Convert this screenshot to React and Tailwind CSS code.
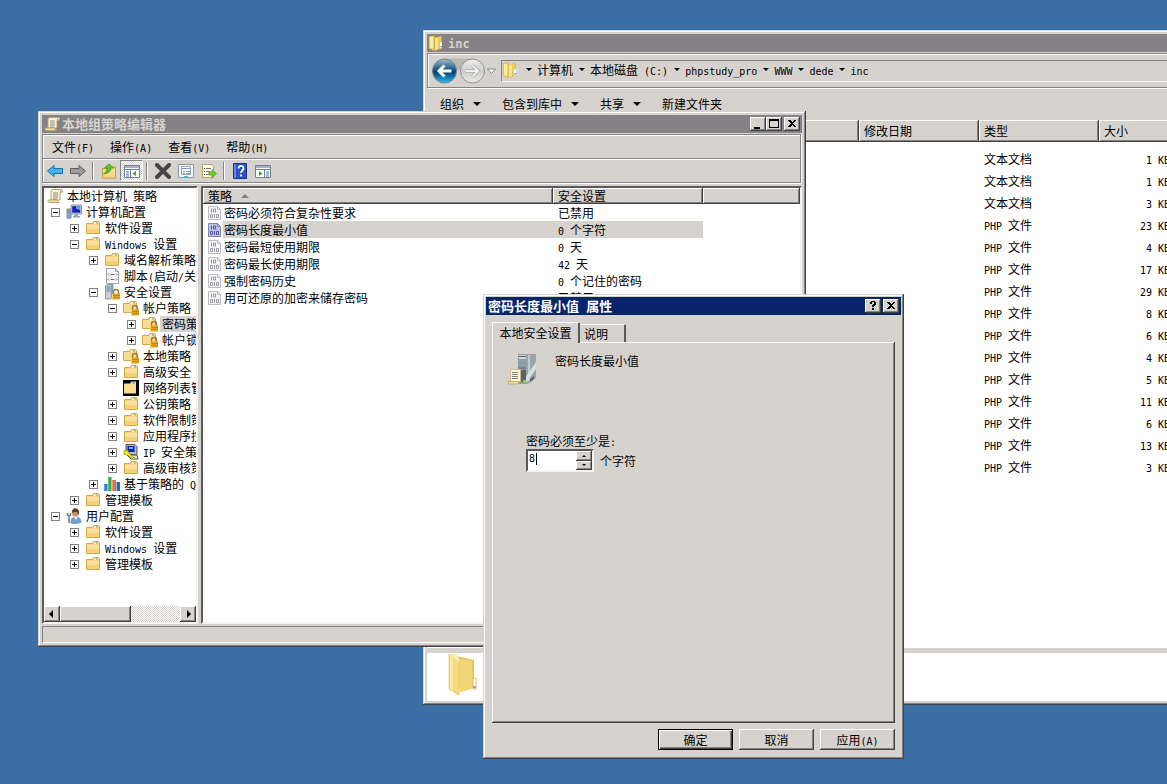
import React, { useState } from "react";

const RAISED =
  "bg-[#d6d3ce] shadow-[inset_-1px_-1px_0_#424142,inset_1px_1px_0_#fff,inset_-2px_-2px_0_#848284]";
const FRAME =
  "bg-[#d6d3ce] shadow-[inset_-1px_-1px_0_#424142,inset_1px_1px_0_#d6d3ce,inset_-2px_-2px_0_#848284,inset_2px_2px_0_#fff]";
const SUNKEN =
  "border-t-2 border-l-2 border-r-2 border-b-2 border-t-[#5a595a] border-l-[#5a595a] border-r-[#f4f3f1] border-b-[#f4f3f1]";
const ETCHED = "border border-[#848284] shadow-[inset_1px_1px_0_#fff,1px_1px_0_#fff]";
const DITHER =
  "bg-[repeating-conic-gradient(#fff_0_25%,#d6d3ce_0_50%)] bg-[length:2px_2px]";

// Latin runs are half the width of a Chinese character
const Text = ({ children, latin = "text-[10px]" }) => (
  <span className="whitespace-pre">
    {children.split(/([\x20-\x7e]+)/).map((part, i) =>
      i % 2 ? (
        <span key={i} className={`font-['DejaVu_Sans_Mono',monospace] leading-none ${latin}`}>
          {part}
        </span>
      ) : (
        part
      )
    )}
  </span>
);

const Svg = ({ size = "size-4", box = "0 0 16 16", children }) => (
  <svg className={`${size} shrink-0`} viewBox={box} aria-hidden="true">
    {children}
  </svg>
);

const FolderIcon = () => (
  <Svg>
    <path d="M1.500 3.500V13.500h13V2.500L13.500 1.500H8.500L7.500 3.500Z" fill="#f5d583" stroke="#d6a647" />
    <path d="M2 5h12v8H2z" fill="#fae09b" />
    <path d="M2 9h12v4H2z" fill="#f3d07c" />
    <path d="M9 2.500h4v1H9z" fill="#fff" />
    <path d="M11 2.500h2v1h-2z" fill="#4a9be0" />
  </Svg>
);

const FolderLockIcon = () => (
  <Svg>
    <path d="M.5 3.500V12.500h13V2.500L12.500 1.500H7.500L6.500 3.500Z" fill="#f9dc94" stroke="#d6a647" />
    <path d="M8 2.500h4v1H8z" fill="#fff" />
    <path d="M10 2.500h2v1h-2z" fill="#4a9be0" />
    <Lock />
  </Svg>
);

const Lock = () => (
  <g>
    <path d="M9.500 10V8a2.500 2.500 0 0 1 5 0v2" fill="none" stroke="#9c7a3a" strokeWidth="1.400" />
    <path d="M8 9.500h8V15.500H8z" fill="#e5a41d" />
    <path d="M8 11.500h8M8 13.500h8" stroke="#b67a0b" strokeWidth=".7" />
    <path d="M8.500 10v5" stroke="#f8d66e" />
  </g>
);

const FolderDarkIcon = () => (
  <Svg>
    <path d="M0 0h16v16H0z" fill="#000" />
    <path d="M1 3.500h6L8.500 1.500H13v12H1z" fill="#f9dc94" />
    <path d="M9 2.500h3v1H9z" fill="#4a9be0" />
  </Svg>
);

const ScrollIcon = () => (
  <Svg>
    <path d="M5 1.500h9a1.500 1.500 0 0 1 .5 3H13V12H4V3Z" fill="#fdf3d0" stroke="#b9a56f" />
    <path d="M1.500 12h9.500v1.500a1.500 1.500 0 0 0 1.500 1H3a1.500 1.500 0 0 1-1.500-2.500Z" fill="#f3e2a6" stroke="#b9a56f" />
    <path d="M6 5h5M6 7h5M6 9h5M6 11h4" stroke="#8a8a9c" />
    <path d="M13 2.500h1.500v1.500H13z" fill="#a89a78" />
  </Svg>
);

const ComputerIcon = () => (
  <Svg>
    <path d="M1 5h4v9H1z" fill="#b8bec8" stroke="#6c7480" strokeWidth=".8" />
    <path d="M2 7h2M2 9h2" stroke="#3e6fb0" />
    <path d="M5 1h10.500v9H5z" fill="#c9d2dd" stroke="#7a8798" strokeWidth=".8" />
    <path d="M6.200 2.200h8v6.500h-8z" fill="#1226b8" />
    <path d="M10 2.200h4.200v4L10 4.500z" fill="#6f9bf0" />
    <path d="M8.500 10h3.500v2h2v1.500H7V12h1.500z" fill="#98a4b3" />
    <path d="M1.500 9.500 3 11l1.500-1.500v3L3.500 15h-1l-1-2.500z" fill="#6aa0dc" />
  </Svg>
);

const ScriptIcon = () => (
  <Svg>
    <path d="M2.500.5h9l3 3v12h-12z" fill="#f7f8fa" stroke="#9ea3ab" />
    <path d="M11.500.5v3h3" fill="none" stroke="#9ea3ab" />
    <path d="M5 5.500 4 6.500 5 7.500M12 5.500 13 6.500 12 7.500M6.500 6.500h4M5 10.500 4 11.500 5 12.500M12 10.500 13 11.500 12 12.500M6.500 11.500h4" fill="none" stroke="#6a707a" />
  </Svg>
);

const ServerLockIcon = () => (
  <Svg>
    <path d="M1.500 1.500 4 .5h5v13l-3 1.500H1.500z" fill="#c4ccd6" stroke="#7d8793" strokeWidth=".8" />
    <path d="M2.500 3h4M2.500 5h4M2.500 7h4" stroke="#5d84ad" />
    <path d="M7 1h2v12H7z" fill="#939eac" />
    <Lock />
  </Svg>
);

const IpIcon = () => (
  <Svg>
    <path d="M3 .5h9l2 2v7l-1 1.500H5L3 9z" fill="#b5b9bf" stroke="#333" strokeWidth=".8" />
    <path d="M4.500 2h7v6h-7z" fill="#0b1dbb" />
    <path d="M6 3h4v2H6z" fill="#43c5ee" />
    <path d="M4 11h10l1 4H8z" fill="#dcdfe2" stroke="#333" strokeWidth=".8" />
    <path d="M1 6.500h4l1 3 6 4.500-1 1.500-7-4.500-3-1z" fill="#f7e616" stroke="#8a7c00" strokeWidth=".6" />
  </Svg>
);

const ChartIcon = () => (
  <Svg>
    <path d="M0 8h3.500v7H0z" fill="#1c87d6" />
    <path d="M4 1h3.500v14H4z" fill="#2fae43" />
    <path d="M8 4h4v11H8z" fill="#ec6b45" />
    <path d="M12.500 6H16v9h-3.500z" fill="#1670b8" />
    <path d="M.5 8.500v6M4.500 1.500v13M8.500 4.500v10" stroke="#fff" strokeOpacity=".3" />
  </Svg>
);

const UserIcon = () => (
  <Svg>
    <path d="M5 15c0-4 1-6 5-6s5 3 5 5c-2 1.500-7 2-10 1z" fill="#6f9fd8" stroke="#4e7ab0" strokeWidth=".6" />
    <path d="m8 9 2 3 1.500-3z" fill="#fff" />
    <circle cx="9.500" cy="5" r="3.600" fill="#c79569" />
    <path d="M6 4.500C6 1 8-.2 10.500.6 13 1.300 13.500 4 12.600 7L11 4z" fill="#4f4339" />
    <path d="M1.500 5v2l1.500 1 1.500-1V5M3 8v7" fill="none" stroke="#6d7782" strokeWidth="1.500" />
  </Svg>
);

const PolicyIcon = ({ active }) => (
  <Svg>
    <path d="M1.500 1.500h9l3 3v10h-12z" fill={active ? "#bfc3e2" : "#f6f6fa"} stroke={active ? "#8083b0" : "#bcbcc4"} />
    <path d="M10.500 1.500v3h3" fill="none" stroke={active ? "#8083b0" : "#bcbcc4"} />
    <path
      d="M4.500 3.500v4M6.500 4h2v3h-2zM3.500 9.500h2v3h-2zM7.500 9v4M9.500 9.500h2v3h-2z"
      fill="none"
      stroke={active ? "#54589c" : "#9a9aa8"}
    />
  </Svg>
);

const OpenFolderIcon = () => (
  <Svg size="w-8 h-11" box="0 0 32 44">
    <path d="M9 3 27 7v28l-14 4z" fill="#e6c55c" />
    <path d="M11 6 25 8v28l-12 2z" fill="#f0d678" />
    <path d="M2 1 11 6q1 1 1 2v34L2 36z" fill="#f4db7e" stroke="#dcb94e" strokeWidth=".6" />
    <path d="M2 1h8l2 5v3L4 3z" fill="#fbeeb0" />
    <path d="M3 4v32l3 2V5z" fill="#fae99f" />
    <path d="M26 25h3v11h-3z" fill="#fff" stroke="#e0c261" />
    <path d="M26.500 33h2v2h-2z" fill="#3fa2df" />
  </Svg>
);

const SmallOpenFolderIcon = () => (
  <Svg>
    <path d="M8 2.500 13.500 1v12L8 15.500z" fill="#edcb57" stroke="#cfa63c" strokeWidth=".5" />
    <path d="M1 1.500 6.500.5v13L6.500 16 1 13.500z" fill="#f0d164" stroke="#cfa63c" strokeWidth=".5" />
    <path d="M2 2h3v11H2z" fill="#fbeb9c" />
    <path d="M7 2.500h3V14l-3 1.500z" fill="#f9e48a" />
    <path d="M12 7.500h2V13l-2 .5z" fill="#fff" />
    <path d="M12.500 11h1.500v1.500h-1.500z" fill="#3fa2df" />
  </Svg>
);

const BigServerIcon = () => (
  <Svg size="size-8" box="0 0 32 32">
    <path d="M11 1h9v30h-9z" fill="#8f9ba3" />
    <path d="M12 2h7v4h-7zM12 7h7v2h-7zM12 11h7v2h-7z" fill="#cfd7dc" />
    <path d="M12 3.500h7M12 8h7M12 12h7M12 15h7" stroke="#5a666e" />
    <path d="M19 1h10v24l-8 6h-2z" fill="#9aa5aa" />
    <path d="M21 2h2v26h-2z" fill="#c3cccf" />
    <path d="M19 24 29 9v7L19 30z" fill="#d8dfe2" />
    <path d="m23 26 4-3v3l-4 3z" fill="#59646a" />
    <path d="M14 17h5v12h-5z" fill="#59646a" />
    <path d="M16 27h3v3h-3z" fill="#7fd420" />
    <path d="M3.500 16.500h10v12h-10z" fill="#fdf5d6" stroke="#cdbb85" />
    <path d="M1.500 28.500h10v2.500h-10z" fill="#f0dfa4" stroke="#c4ae70" />
    <path d="M5 19.500h6M5 21.500h6M5 23.500h6M5 25.500h6" stroke="#7d7f9a" />
  </Svg>
);

const NavButtons = () => (
  <svg className="h-7 w-17 shrink-0" viewBox="0 0 68 28" aria-hidden="true">
    <defs>
      <linearGradient id="back" x1="0" y1="0" x2="0" y2="1">
        <stop offset="0" stopColor="#a5bccb" />
        <stop offset=".4" stopColor="#245f8d" />
        <stop offset=".55" stopColor="#053f70" />
        <stop offset="1" stopColor="#2cc3f2" />
      </linearGradient>
      <linearGradient id="fwd" x1="0" y1="0" x2="0" y2="1">
        <stop offset="0" stopColor="#f0efee" />
        <stop offset=".5" stopColor="#cfcdca" />
        <stop offset="1" stopColor="#eceae8" />
      </linearGradient>
    </defs>
    <path d="M14 1.500h28v7q-14 10-28 0z" fill="#bab8b5" />
    <circle cx="13.500" cy="14" r="12" fill="url(#back)" stroke="#75818c" />
    <path d="M20.500 14h-12M13.500 8.500 8 14l5.500 5.500" fill="none" stroke="#fff" strokeWidth="3" />
    <circle cx="41.500" cy="14" r="12" fill="url(#fwd)" stroke="#929292" />
    <path d="M34.500 14h12M41.500 8.500 47 14l-5.500 5.500" fill="none" stroke="#aaa" strokeWidth="3.500" />
    <path d="M34.500 14h12M41.500 8.500 47 14l-5.500 5.500" fill="none" stroke="#efefef" strokeWidth="2" />
    <path d="M56.500 12h8l-4 4.500z" fill="#fff" stroke="#7a8290" />
  </svg>
);

const Triangle = ({ size = "w-2 h-1", down = true, fill = "#000" }) => (
  <svg className={`${size} shrink-0`} viewBox="0 0 8 4" aria-hidden="true">
    <path d={down ? "M0 0h8L4 4z" : "M0 4h8L4 0z"} fill={fill} />
  </svg>
);

const toolIcons = {
  back: <path d="M.5 8 7 2.500V5.500h8.500v5H7v3z" fill="#48b1ee" stroke="#1b6fae" />,
  forward: <path d="M15.500 8 9 2.500V5.500H.5v5H9v3z" fill="#9b9b9b" stroke="#5f5f5f" />,
  up: (
    <g>
      <path d="M1.500 5.500h5l1-1.500h7v11h-13z" fill="#f7d98c" stroke="#c99c3e" />
      <path d="M2.500 11c2-1 3.500-3 3.500-6H3.500L8 1l4.500 4H10c0 3-2.500 5.500-7.500 6z" fill="#58c524" stroke="#2f8a12" strokeWidth=".7" />
    </g>
  ),
  tree: (
    <g>
      <path d="M.5 2.500h15v12H.5z" fill="#fff" stroke="#77808f" />
      <path d="M1 3h14v2H1z" fill="#9fb0c8" />
      <path d="M1 6.500h14" stroke="#77808f" />
      <path d="M2 9h3M2 11h3M2 13h3" stroke="#3e78c4" />
      <path d="M6.500 7v7" stroke="#77808f" />
      <path d="M12 8v5L8.500 10.500z" fill="#3da51f" />
    </g>
  ),
  remove: <path d="m2 2 12 12M14 2 2 14" stroke="#454545" strokeWidth="4" strokeLinecap="round" />,
  props: (
    <g>
      <path d="M.5 1.500h15v13H.5z" fill="#f4f6f9" stroke="#8c96a5" />
      <path d="M3.500 3.500h9v8h-9z" fill="#fff" stroke="#9aa8bb" />
      <path d="M4 5.500h8" stroke="#7d9bc6" />
      <path d="M5 8.500h2M8 8.500h4M5 10.500h2M8 10.500h4" stroke="#8c96a5" />
      <path d="M6 13h4v1.500H6z" fill="#39bde8" />
    </g>
  ),
  export: (
    <g>
      <path d="M1.500 1.500h9l2 2v11h-11z" fill="#fffbe6" stroke="#b8a567" />
      <path d="M5 5.500h5M5 8.500h4M5 11.500h4" stroke="#77777f" />
      <path d="M3 5.500h1M3 8.500h1M3 11.500h1" stroke="#333" />
      <path d="M8 9h3V6.500l4.500 4-4.500 4V12H8z" fill="#6fd02c" stroke="#3b9a15" strokeWidth=".7" />
    </g>
  ),
  help: (
    <g>
      <path d="M1.500.5h13v15h-13z" fill="#2c52c9" stroke="#1a3288" />
      <path d="M2 1h2v14H2z" fill="#6688e6" />
      <path d="M6.500 5.500C6.500 2 11.500 2 11.500 5.200 11.500 7.500 9 7.500 9 10M9 11.500v2" fill="none" stroke="#fff" strokeWidth="1.800" />
    </g>
  ),
  panel: (
    <g>
      <path d="M.5 2.500h15v12H.5z" fill="#fff" stroke="#77808f" />
      <path d="M1 3h14v2H1z" fill="#9fb0c8" />
      <path d="M1 6.500h14" stroke="#77808f" />
      <path d="M11 9h3M11 11h3M11 13h3" stroke="#3e78c4" />
      <path d="M9.500 7v7" stroke="#77808f" />
      <path d="M4 8v5l3.500-2.500z" fill="#3da51f" />
    </g>
  ),
};

const ToolButton = ({ name, label, pressed }) => (
  <button
    type="button"
    aria-label={label}
    aria-pressed={pressed}
    className={`flex h-[21px] w-[23px] items-center justify-center ${
      pressed ? `border border-t-[#848284] border-r-white border-b-white border-l-[#848284] ${DITHER}` : ""
    }`}
  >
    <Svg>{toolIcons[name]}</Svg>
  </button>
);

const Separator = () => (
  <div className="mx-[3px] h-[18px] w-[2px] border-l border-r border-l-[#848284] border-r-white" />
);

const glyphs = {
  min: <path d="M4 10h6v2H4z" />,
  max: <path d="M3 2h10v9H3zM4 4v6h8V4z" fillRule="evenodd" />,
  close: <path d="M4 3h2l2 2 2-2h2L9 6.500 12 10h-2L8 8l-2 2H4l3-3.500z" />,
  help: <path d="M5 3h1V2h4v1h1v3h-1v1H9v1H7V6h1V5h1V3H7v2H5zM7 9h2v2H7z" />,
};

const TitleButton = ({ name, label }) => (
  <button type="button" aria-label={label} className={`h-[14px] w-4 ${RAISED}`}>
    <svg className="h-[14px] w-4" viewBox="0 0 16 14" shapeRendering="crispEdges" aria-hidden="true">
      {glyphs[name]}
    </svg>
  </button>
);

const files = [
  ["文本文档", 1],
  ["文本文档", 1],
  ["文本文档", 3],
  ["PHP 文件", 23],
  ["PHP 文件", 4],
  ["PHP 文件", 17],
  ["PHP 文件", 29],
  ["PHP 文件", 8],
  ["PHP 文件", 6],
  ["PHP 文件", 4],
  ["PHP 文件", 5],
  ["PHP 文件", 11],
  ["PHP 文件", 6],
  ["PHP 文件", 13],
  ["PHP 文件", 3],
];

const path = ["计算机", "本地磁盘 (C:)", "phpstudy_pro", "WWW", "dede", "inc"];

const ExplorerWindow = () => (
  <section className={`absolute top-[30px] -right-[11px] left-[423px] flex h-[675px] flex-col p-1 ${FRAME}`}>
    <header className="flex h-[18px] shrink-0 items-center gap-1 bg-[#848284] pl-px text-[13px] font-bold text-[#d6d3ce]">
      <SmallOpenFolderIcon />
      <Text latin="text-[12px]">inc</Text>
    </header>

    <div className={`mt-px flex h-[35px] shrink-0 items-center pl-[3px] ${ETCHED}`}>
      <NavButtons />
      <nav className="ml-[2px] flex h-[22px] flex-1 items-center border-t border-b border-l border-t-[#848284] border-b-white border-l-[#848284] pb-[2px]">
        <SmallOpenFolderIcon />
        <ul className="flex items-center pl-[2px]">
          {path.map((item) => (
            <li key={item} className="flex items-center">
              <span className="flex w-[17px] justify-center">
                <Triangle size="w-[6px] h-[3px]" />
              </span>
              <a href="#" className="leading-4">
                <Text>{item}</Text>
              </a>
            </li>
          ))}
        </ul>
      </nav>
    </div>

    <div className="flex h-8 shrink-0 items-center gap-[21px] pl-[13px]">
      {["组织", "包含到库中", "共享", "新建文件夹"].map((item, i) => (
        <button key={item} type="button" className="flex items-center gap-[9px] leading-4">
          {item}
          {i < 3 && <Triangle />}
        </button>
      ))}
    </div>

    <div className="flex-1 overflow-hidden bg-white">
      <table className="w-full table-fixed">
        <colgroup>
          <col />
          <col className="w-[120px]" />
          <col className="w-[120px]" />
          <col className="w-[75px]" />
        </colgroup>
        <thead>
          <tr className="h-[22px]">
            {["名称", "修改日期", "类型", "大小"].map((title) => (
              <th key={title} className={`pl-[5px] text-left font-normal ${RAISED}`}>
                {title}
              </th>
            ))}
          </tr>
        </thead>
        <tbody>
          <tr className="h-[6px]" />
          {files.map(([type, size], i) => (
            <tr key={i} className="h-[22px]">
              <td />
              <td />
              <td className="pl-[5px]">
                <Text>{type}</Text>
              </td>
              <td className="pr-1 text-right">
                <Text>{`${size} KB`}</Text>
              </td>
            </tr>
          ))}
        </tbody>
      </table>
    </div>
    <footer className="h-[53px] shrink-0 border-t-[5px] border-[#d6d3ce] bg-white pl-5">
      <OpenFolderIcon />
    </footer>
  </section>
);

const indents = ["pl-[3px]", "pl-[7px]", "pl-[26px]", "pl-[45px]", "pl-[64px]", "pl-[83px]"];

// [level, expander, icon, label]
const tree = [
  [0, null, ScrollIcon, "本地计算机 策略"],
  [1, "-", ComputerIcon, "计算机配置"],
  [2, "+", FolderIcon, "软件设置"],
  [2, "-", FolderIcon, "Windows 设置"],
  [3, "+", FolderIcon, "域名解析策略"],
  [3, "", ScriptIcon, "脚本(启动/关机)"],
  [3, "-", ServerLockIcon, "安全设置"],
  [4, "-", FolderLockIcon, "帐户策略"],
  [5, "+", FolderLockIcon, "密码策略"],
  [5, "+", FolderLockIcon, "帐户锁定策略"],
  [4, "+", FolderLockIcon, "本地策略"],
  [4, "+", FolderIcon, "高级安全"],
  [4, "", FolderDarkIcon, "网络列表管理器策略"],
  [4, "+", FolderIcon, "公钥策略"],
  [4, "+", FolderIcon, "软件限制策略"],
  [4, "+", FolderIcon, "应用程序控制策略"],
  [4, "+", IpIcon, "IP 安全策略"],
  [4, "+", FolderIcon, "高级审核策略配置"],
  [3, "+", ChartIcon, "基于策略的 QoS"],
  [2, "+", FolderIcon, "管理模板"],
  [1, "-", UserIcon, "用户配置"],
  [2, "+", FolderIcon, "软件设置"],
  [2, "+", FolderIcon, "Windows 设置"],
  [2, "+", FolderIcon, "管理模板"],
];

const Expander = ({ sign }) => (
  <svg className="mr-[6px] size-[9px] shrink-0" viewBox="0 0 9 9" shapeRendering="crispEdges" aria-hidden="true">
    {sign && (
      <>
        <path d="M0 0h9v9H0zM1 1v7h7V1z" fill="#848284" fillRule="evenodd" />
        <path d={sign === "+" ? "M2 4h2V2h1v2h2v1H5v2H4V5H2z" : "M2 4h5v1H2z"} />
      </>
    )}
  </svg>
);

const ScrollButton = ({ d, label }) => (
  <button type="button" aria-label={label} className={`size-4 shrink-0 ${RAISED}`}>
    <svg className="size-4" viewBox="0 0 16 16" aria-hidden="true">
      <path d={d} />
    </svg>
  </button>
);

const TreePane = () => (
  <div className={`flex w-[156px] shrink-0 flex-col bg-white ${SUNKEN}`}>
    <ul className="flex-1 overflow-hidden">
      {tree.map(([level, sign, Icon, label], i) => (
        <li key={i} className={`flex h-4 items-center ${indents[level]}`}>
          {level > 0 && <Expander sign={sign} />}
          <Icon />
          <span className={`ml-[2px] px-[2px] leading-4 ${label === "密码策略" ? "bg-[#d6d3ce]" : ""}`}>
            <Text>{label}</Text>
          </span>
        </li>
      ))}
    </ul>
    <div className={`flex h-4 ${DITHER}`}>
      <ScrollButton label="向左滚动" d="M9 4v8L5 8z" />
      <div className={`w-[71px] ${RAISED}`} />
      <div className="flex-1" />
      <ScrollButton label="向右滚动" d="M7 4v8l4-4z" />
    </div>
  </div>
);

const policies = [
  ["密码必须符合复杂性要求", "已禁用"],
  ["密码长度最小值", "0 个字符"],
  ["密码最短使用期限", "0 天"],
  ["密码最长使用期限", "42 天"],
  ["强制密码历史", "0 个记住的密码"],
  ["用可还原的加密来储存密码", "已禁用"],
];

const PolicyPane = () => (
  <div className={`flex-1 overflow-hidden bg-white ${SUNKEN}`}>
    <table className="w-full table-fixed">
      <colgroup>
        <col className="w-[350px]" />
        <col className="w-[150px]" />
        <col />
      </colgroup>
      <thead>
        <tr className="h-4 text-left">
          <th className={`pl-[5px] font-normal ${RAISED}`}>
            <span className="flex items-center gap-[9px]">
              策略
              <Triangle down={false} fill="#848284" />
            </span>
          </th>
          <th className={`pl-[5px] font-normal ${RAISED}`}>安全设置</th>
          <th className={RAISED} />
        </tr>
      </thead>
      <tbody>
        {policies.map(([name, value], i) => (
          <tr key={name}>
            <td>
              <div className="flex h-[17px] items-center pl-1">
                <PolicyIcon active={i === 1} />
                <span className={`flex-1 pl-px leading-[17px] ${i === 1 ? "bg-[#d6d3ce]" : ""}`}>{name}</span>
              </div>
            </td>
            <td>
              <div className={`h-[17px] pl-[5px] leading-[17px] ${i === 1 ? "bg-[#d6d3ce]" : ""}`}>
                <Text>{value}</Text>
              </div>
            </td>
            <td />
          </tr>
        ))}
      </tbody>
    </table>
  </div>
);

const PolicyEditorWindow = () => (
  <section className={`absolute top-[111px] left-[38px] flex h-[536px] w-[768px] flex-col p-1 ${FRAME}`}>
    <header className="flex h-[18px] shrink-0 items-center bg-[#848284] pr-[2px] pl-[2px] text-[13px] font-bold text-[#d6d3ce]">
      <ScrollIcon />
      <h1 className="flex-1 pl-[2px] leading-4">本地组策略编辑器</h1>
      <TitleButton name="min" label="最小化" />
      <TitleButton name="max" label="最大化" />
      <span className="w-[2px]" />
      <TitleButton name="close" label="关闭" />
    </header>

    <div className="mt-px shrink-0">
      <nav className={`mr-px flex h-[25px] items-center gap-4 pl-[9px] ${ETCHED}`}>
        {["文件(F)", "操作(A)", "查看(V)", "帮助(H)"].map((item) => (
          <button key={item} type="button" className="leading-4">
            <Text>{item}</Text>
          </button>
        ))}
      </nav>
      <div className="mr-px flex h-6 items-center border-r border-b border-l border-[#848284] shadow-[inset_1px_1px_0_#fff,1px_1px_0_#fff]">
        <ToolButton name="back" label="后退" />
        <ToolButton name="forward" label="前进" />
        <Separator />
        <ToolButton name="up" label="上移一级" />
        <ToolButton name="tree" label="显示/隐藏控制台树" pressed />
        <Separator />
        <ToolButton name="remove" label="删除" />
        <ToolButton name="props" label="属性" />
        <ToolButton name="export" label="导出列表" />
        <Separator />
        <ToolButton name="help" label="帮助" />
        <ToolButton name="panel" label="显示/隐藏操作窗格" />
      </div>
    </div>

    <div className="mt-[3px] flex min-h-0 flex-1 gap-[3px]">
      <TreePane />
      <PolicyPane />
    </div>

    <footer className="mt-[2px] h-[17px] shrink-0 border border-t-[#848284] border-r-white border-b-white border-l-[#848284]" />
  </section>
);

const PropertiesDialog = () => {
  const [length, setLength] = useState("8");
  const step = (n) => setLength(String(Math.max(0, Number(length) + n)));

  return (
    <section role="dialog" className={`absolute top-[294px] left-[483px] flex h-[465px] w-[421px] flex-col p-[3px] ${FRAME}`}>
      <header className="flex h-[18px] shrink-0 items-center gap-[2px] bg-[#08246b] pr-[2px] pl-[2px] text-[13px] font-bold text-white">
        <h2 className="flex-1 leading-4">
          <Text latin="text-[12px]">密码长度最小值 属性</Text>
        </h2>
        <TitleButton name="help" label="帮助" />
        <TitleButton name="close" label="关闭" />
      </header>

      <div className="flex flex-1 flex-col px-[6px] pt-[7px] pb-[6px]">
        <div role="tablist" className="flex h-5 shrink-0 items-end">
          <button
            type="button"
            role="tab"
            aria-selected="true"
            className="relative z-10 -mb-px h-[21px] w-[88px] rounded-t-[2px] border-t border-r-2 border-l border-t-white border-r-[#5a595a] border-l-white bg-[#d6d3ce] leading-4"
          >
            本地安全设置
          </button>
          <button
            type="button"
            role="tab"
            aria-selected="false"
            className="h-[18px] w-[46px] rounded-t-[2px] border-t border-r-2 border-t-white border-r-[#5a595a] pl-1 text-left leading-4"
          >
            说明
          </button>
        </div>

        <div role="tabpanel" className={`flex-1 px-[15px] pt-[11px] ${RAISED}`}>
          <div className="flex gap-4">
            <BigServerIcon />
            <p className="leading-4">密码长度最小值</p>
          </div>
          <div className="mt-12 pl-[19px]">
            <label htmlFor="min-length" className="block leading-4">
              <Text>密码必须至少是:</Text>
            </label>
            <div className="flex items-center gap-[6px]">
              <div className={`relative flex h-[23px] w-[68px] bg-white ${SUNKEN}`}>
                <input
                  id="min-length"
                  type="text"
                  value={length}
                  onChange={(e) => setLength(e.target.value)}
                  className="h-4 w-0 flex-1 pl-px font-['DejaVu_Sans_Mono',monospace] text-[10px] leading-4 caret-transparent outline-none"
                />
                <span className="absolute top-[2px] left-2 h-3 w-px bg-black" />
                <div className="flex w-4 flex-col">
                  <button type="button" aria-label="增加" onClick={() => step(1)} className={`flex flex-1 items-center justify-center ${RAISED}`}>
                    <Triangle size="w-1 h-[2px]" down={false} />
                  </button>
                  <button type="button" aria-label="减少" onClick={() => step(-1)} className={`flex flex-1 items-center justify-center ${RAISED}`}>
                    <Triangle size="w-1 h-[2px]" />
                  </button>
                </div>
              </div>
              <span className="leading-4">个字符</span>
            </div>
          </div>
        </div>

        <div className="mt-[6px] flex shrink-0 justify-end gap-[6px]">
          <button type="button" className="h-[21px] w-[75px] border border-black bg-[#d6d3ce] shadow-[inset_1px_1px_0_#fff,inset_-1px_-1px_0_#424142,inset_-2px_-2px_0_#848284]">
            确定
          </button>
          <button type="button" className={`h-[21px] w-[75px] ${RAISED}`}>
            取消
          </button>
          <button type="button" className={`h-[21px] w-[75px] ${RAISED}`}>
            <Text>应用(A)</Text>
          </button>
        </div>
      </div>
    </section>
  );
};

export default function App() {
  return (
    <main className="relative h-screen min-h-[784px] w-full overflow-hidden bg-[#3a6ea5] font-['Noto_Sans_CJK_SC',sans-serif] text-[12px] leading-4 text-black">
      <ExplorerWindow />
      <PolicyEditorWindow />
      <PropertiesDialog />
    </main>
  );
}
